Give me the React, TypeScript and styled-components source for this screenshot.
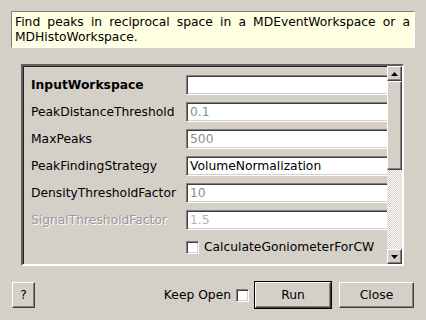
import React from "react";
import styled, { createGlobalStyle, css } from "styled-components";

const Global = createGlobalStyle`
  html, body { margin: 0; padding: 0; background: #d4d0c8; }
  body {
    font-family: "DejaVu Sans", "Liberation Sans", sans-serif;
    font-size: 12.3px;
    color: #000;
  }
`;

const sunken = css`
  border-style: solid;
  border-width: 1px;
  border-color: #808080 #fff #fff #808080;
  box-shadow: inset 1px 1px 0 #404040, inset -1px -1px 0 #d4d0c8;
`;

const raised = css`
  border-style: solid;
  border-width: 1px;
  border-color: #fff #404040 #404040 #fff;
  box-shadow: inset -1px -1px 0 #808080;
`;

const Page = styled.div`
  width: 426px;
  height: 320px;
  box-sizing: border-box;
  padding: 11px 11px 0 11px;
  display: flex;
  flex-direction: column;
`;

const Description = styled.div`
  box-sizing: border-box;
  height: 37px;
  border: 1px solid;
  border-color: #808080 #fff #fff #808080;
  background: #ffffe1;
  padding: 3px 4px 0 3px;
  line-height: 15px;
  text-align: justify;
`;

const Frame = styled.div`
  margin: 16px 11px 0 10px;
  height: 202px;
  box-sizing: border-box;
  border-style: solid;
  border-width: 2px;
  border-color: #606060 #fff #fff #606060;
  box-shadow: inset 1px 1px 0 #202020;
  display: flex;
`;

const Viewport = styled.div`
  flex: 1;
  overflow: hidden;
  padding: 9px 0 0 8px;
  display: grid;
  grid-template-columns: 155px 230px;
  grid-auto-rows: 20px;
  row-gap: 7px;
  align-content: start;
  align-items: center;
`;

const Label = styled.div<{ $bold?: boolean; $disabled?: boolean }>`
  white-space: nowrap;
  font-weight: ${(p) => (p.$bold ? "bold" : "normal")};
  color: ${(p) => (p.$disabled ? "#9a9a9a" : "#000")};
  text-shadow: ${(p) => (p.$disabled ? "1px 1px 0 #fff" : "none")};
`;

const Field = styled.div<{ $muted?: "gray" | "light" }>`
  ${sunken};
  box-sizing: border-box;
  height: 20px;
  background: #fff;
  padding: 0 4px 0 3px;
  line-height: 18px;
  white-space: nowrap;
  color: ${(p) =>
    p.$muted === "gray" ? "#8a8a8a" : p.$muted === "light" ? "#b4b4b4" : "#000"};
`;

const CheckRow = styled.div`
  grid-column: 2;
  display: flex;
  align-items: center;
  gap: 5px;
  white-space: nowrap;
`;

const Box = styled.span`
  ${sunken};
  display: inline-block;
  box-sizing: border-box;
  width: 13px;
  height: 13px;
  background: #fff;
`;

const ScrollBar = styled.div`
  width: 15px;
  display: flex;
  flex-direction: column;
`;

const ArrowButton = styled.div`
  ${raised};
  box-sizing: border-box;
  height: 15px;
  background: #d4d0c8;
  display: flex;
  align-items: center;
  justify-content: center;
`;

const Slider = styled.div`
  ${raised};
  box-sizing: border-box;
  height: 89px;
  background: #d4d0c8;
`;

const Track = styled.div`
  flex: 1;
  background-color: #d4d0c8;
  background-image: repeating-conic-gradient(#ffffff 0 25%, #d4d0c8 0 50%);
  background-size: 2px 2px;
`;

const BottomRow = styled.div`
  margin: 16px 1px 0 1px;
  display: flex;
  align-items: center;
`;

const Button = styled.button<{ $w: number; $default?: boolean }>`
  ${raised};
  width: ${(p) => p.$w}px;
  height: 26px;
  box-sizing: border-box;
  background: #d4d0c8;
  font-family: inherit;
  font-size: 12.3px;
  color: #000;
  padding: 0;
  ${(p) =>
    p.$default &&
    css`
      outline: 1px solid #000;
      outline-offset: 0;
      border-color: #fff #404040 #404040 #fff;
    `}
`;

const Spacer = styled.div`
  flex: 1;
`;

const KeepOpen = styled.div`
  display: flex;
  align-items: center;
  gap: 5px;
  margin-right: 6px;
`;

const Gap = styled.div<{ $w: number }>`
  width: ${(p) => p.$w}px;
`;

const Up = () => (
  <svg width="7" height="4" viewBox="0 0 7 4">
    <path d="M3.5 0 L7 4 L0 4 Z" fill="#000" />
  </svg>
);
const Down = () => (
  <svg width="7" height="4" viewBox="0 0 7 4">
    <path d="M0 0 L7 0 L3.5 4 Z" fill="#000" />
  </svg>
);

export default function App() {
  return (
    <>
      <Global />
      <Page>
        <Description>
          Find peaks in reciprocal space in a MDEventWorkspace or a MDHistoWorkspace.
        </Description>
        <Frame>
          <Viewport>
            <Label $bold>InputWorkspace</Label>
            <Field></Field>
            <Label>PeakDistanceThreshold</Label>
            <Field $muted="gray">0.1</Field>
            <Label>MaxPeaks</Label>
            <Field $muted="gray">500</Field>
            <Label>PeakFindingStrategy</Label>
            <Field>VolumeNormalization</Field>
            <Label>DensityThresholdFactor</Label>
            <Field $muted="gray">10</Field>
            <Label $disabled>SignalThresholdFactor</Label>
            <Field $muted="light">1.5</Field>
            <CheckRow>
              <Box />
              <span>CalculateGoniometerForCW</span>
            </CheckRow>
            <Label></Label>
            <Field></Field>
          </Viewport>
          <ScrollBar>
            <ArrowButton>
              <Up />
            </ArrowButton>
            <Slider />
            <Track />
            <ArrowButton>
              <Down />
            </ArrowButton>
          </ScrollBar>
        </Frame>
        <BottomRow>
          <Button $w={23}>?</Button>
          <Spacer />
          <KeepOpen>
            <span>Keep Open</span>
            <Box />
          </KeepOpen>
          <Button $w={76} $default>
            Run
          </Button>
          <Gap $w={8} />
          <Button $w={75}>Close</Button>
        </BottomRow>
      </Page>
    </>
  );
}
